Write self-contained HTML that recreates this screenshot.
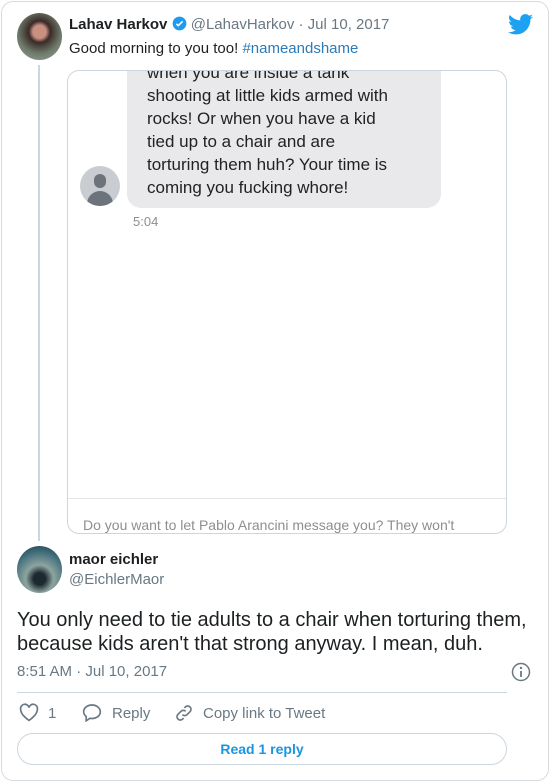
<!DOCTYPE html>
<html><head><style>
*{margin:0;padding:0;box-sizing:border-box}
body{width:550px;height:782px;background:#fff;font-family:"Liberation Sans",sans-serif;position:relative;overflow:hidden}
.a{position:absolute}
</style></head><body>
<div class="a" style="left:1px;top:1px;width:548px;height:780px;border:1px solid #d6dbe0;border-radius:12px"></div>
<div class="a" style="left:17px;top:13px;width:45px;height:47px;border-radius:50%;background:radial-gradient(circle at 50% 40%,#c99080 0 18%,#3a2a28 30%,#6d7a6a 60%,#9aa39a)"></div>
<div class="a" style="left:69px;top:16px;font-size:15px;color:#1c2022;white-space:nowrap"><b>Lahav Harkov</b> <svg width="15" height="15" viewBox="0 0 24 24" style="vertical-align:-2px"><circle cx="12" cy="12" r="11" fill="#1d9bf0"/><path d="M7 12.5l3 3 7-7" stroke="#fff" stroke-width="2.5" fill="none"/></svg> <span style="color:#697882">@LahavHarkov · Jul 10, 2017</span></div>
<div class="a" style="left:69px;top:40px;font-size:15px;color:#1c2022">Good morning to you too! <span style="color:#2b7bb9">#nameandshame</span></div>
<svg class="a" style="left:508px;top:14px" width="25" height="21" viewBox="0 0 24 20"><path fill="#1da1f2" d="M24 2.4a9.8 9.8 0 0 1-2.8.8A4.9 4.9 0 0 0 23.3.4a9.9 9.9 0 0 1-3.1 1.2A4.9 4.9 0 0 0 11.8 6 14 14 0 0 1 1.7.9a4.9 4.9 0 0 0 1.5 6.6A4.9 4.9 0 0 1 1 6.9 4.9 4.9 0 0 0 4.9 11.8a4.9 4.9 0 0 1-2.2.1 4.9 4.9 0 0 0 4.6 3.4A9.9 9.9 0 0 1 0 17.3 14 14 0 0 0 7.5 19.5c9 0 14-7.5 14-14v-.6A10 10 0 0 0 24 2.4z"/></svg>
<div class="a" style="left:38px;top:65px;width:2px;height:476px;background:#ccd6dd"></div>
<div class="a" style="left:67px;top:70px;width:440px;height:464px;border:1px solid #ccd6dd;border-radius:12px;overflow:hidden;background:#fff">
 <div class="a" style="left:59px;top:-10px;width:314px;height:147px;background:#e9e9eb;border-radius:0 0 14px 14px"></div>
 <div class="a" style="left:79px;top:-10px;font-size:17px;line-height:23px;color:#222;white-space:nowrap">when you are inside a tank<br>shooting at little kids armed with<br>rocks! Or when you have a kid<br>tied up to a chair and are<br>torturing them huh? Your time is<br>coming you fucking whore!</div>
 <div class="a" style="left:12px;top:95px;width:40px;height:40px;border-radius:50%;background:#c9ccd0;overflow:hidden"><div class="a" style="left:14px;top:8px;width:12px;height:14px;border-radius:6px;background:#6c737b"></div><div class="a" style="left:7px;top:25px;width:26px;height:20px;border-radius:13px 13px 0 0;background:#6c737b"></div></div>
 <div class="a" style="left:65px;top:143px;font-size:13px;color:#8e8e93">5:04</div>
 <div class="a" style="left:0;top:427px;width:440px;height:1px;background:#e5e5e5"></div>
 <div class="a" style="left:15px;top:446px;font-size:14px;color:#8e8e93;white-space:nowrap">Do you want to let Pablo Arancini message you? They won't</div>
</div>
<div class="a" style="left:17px;top:546px;width:45px;height:47px;border-radius:50%;background:radial-gradient(circle at 50% 70%,#1c2a30 0 15%,#8ea4a0 35%,#3c6a78 70%,#1a3340)"></div>
<div class="a" style="left:69px;top:551px;font-size:15px;font-weight:bold;color:#1c2022">maor eichler</div>
<div class="a" style="left:69px;top:571px;font-size:15px;color:#697882">@EichlerMaor</div>
<div class="a" style="left:17px;top:608px;font-size:20px;line-height:24px;color:#1c2022;width:525px">You only need to tie adults to a chair when torturing them, because kids aren't that strong anyway. I mean, duh.</div>
<div class="a" style="left:17px;top:663px;font-size:15px;color:#697882">8:51 AM · Jul 10, 2017</div>
<svg class="a" style="left:511px;top:662px" width="20" height="20" viewBox="0 0 20 20"><circle cx="10" cy="10" r="8.5" fill="none" stroke="#697882" stroke-width="1.5"/><circle cx="10" cy="6" r="1.2" fill="#697882"/><path d="M10 9v6" stroke="#697882" stroke-width="1.8"/></svg>
<div class="a" style="left:17px;top:692px;width:490px;height:1px;background:#ccd6dd"></div>
<svg class="a" style="left:19px;top:703px" width="20" height="19" viewBox="0 0 24 22"><path d="M12 20.5S2 14 2 7.5A5 5 0 0 1 12 5a5 5 0 0 1 10 2.5C22 14 12 20.5 12 20.5z" fill="none" stroke="#697882" stroke-width="2"/></svg>
<div class="a" style="left:48px;top:705px;font-size:15px;color:#697882">1</div>
<svg class="a" style="left:82px;top:703px" width="20" height="19" viewBox="0 0 24 22"><path d="M12 2C6.5 2 2 5.6 2 10c0 2.3 1.2 4.3 3 5.8V21l4.5-3c.8.2 1.6.2 2.5.2 5.5 0 10-3.6 10-8S17.5 2 12 2z" fill="none" stroke="#697882" stroke-width="2"/></svg>
<div class="a" style="left:112px;top:705px;font-size:15px;color:#697882">Reply</div>
<svg class="a" style="left:174px;top:703px" width="20" height="20" viewBox="0 0 24 24"><path d="M10 14a4 4 0 0 0 5.6 0l4-4a4 4 0 0 0-5.6-5.6l-1.5 1.5M14 10a4 4 0 0 0-5.6 0l-4 4a4 4 0 0 0 5.6 5.6l1.5-1.5" fill="none" stroke="#697882" stroke-width="2"/></svg>
<div class="a" style="left:203px;top:705px;font-size:15px;color:#697882">Copy link to Tweet</div>
<div class="a" style="left:17px;top:733px;width:490px;height:32px;border:1px solid #ccd6dd;border-radius:16px;text-align:center;line-height:30px;font-size:14px;font-weight:bold;color:#1b95e0">Read 1 reply</div>
</body></html>
